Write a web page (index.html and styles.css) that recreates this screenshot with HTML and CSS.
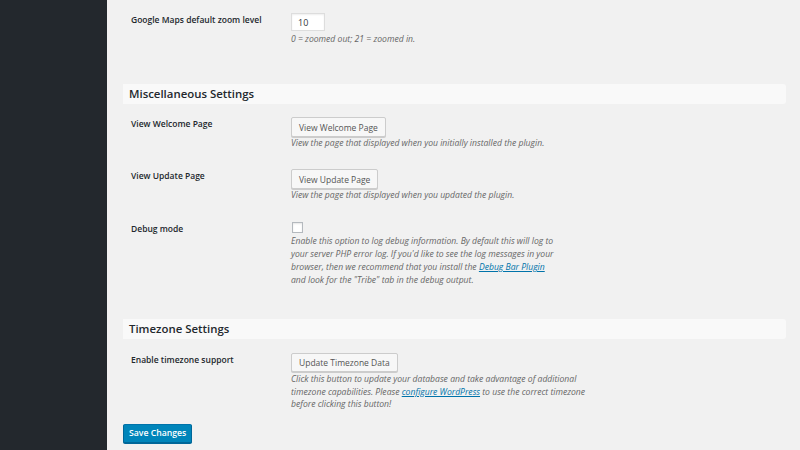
FILE: index.html
```html
<!DOCTYPE html>
<html lang="en">
<head>
    <meta charset="UTF-8">
    <meta name="viewport" content="width=device-width, initial-scale=1.0">
    <title>Events Settings</title>
    <link rel="stylesheet" href="styles.css">
</head>
<body>
    <div class="admin_menu"></div>

    <div class="wrap">
        <div class="form_row row_zoom">
            <div class="form_label">Google Maps default zoom level</div>
            <div class="form_field">
                <input class="small_text" type="text" value="10">
                <p class="description desc_after_input">0 = zoomed out; 21 = zoomed in.</p>
            </div>
        </div>

        <h3 class="section_title section_misc">Miscellaneous Settings</h3>

        <div class="form_row">
            <div class="form_label">View Welcome Page</div>
            <div class="form_field">
                <button class="button">View Welcome Page</button>
                <p class="description">View the page that displayed when you initially installed the plugin.</p>
            </div>
        </div>

        <div class="form_row row_update">
            <div class="form_label">View Update Page</div>
            <div class="form_field">
                <button class="button">View Update Page</button>
                <p class="description">View the page that displayed when you updated the plugin.</p>
            </div>
        </div>

        <div class="form_row row_debug">
            <div class="form_label">Debug mode</div>
            <div class="form_field">
                <span class="checkbox"></span>
                <p class="description desc_debug">Enable this option to log debug information. By default this will log to your server PHP error log. If you'd like to see the log messages in your browser, then we recommend that you install the <a href="#">Debug Bar Plugin</a> and look for the "Tribe" tab in the debug output.</p>
            </div>
        </div>

        <h3 class="section_title section_tz">Timezone Settings</h3>

        <div class="form_row row_tz">
            <div class="form_label">Enable timezone support</div>
            <div class="form_field">
                <button class="button button_tz">Update Timezone Data</button>
                <p class="description desc_tz">Click this button to update your database and take advantage of additional timezone capabilities. Please <a href="#">configure WordPress</a> to use the correct timezone before clicking this button!</p>
            </div>
        </div>

        <button class="button button_primary">Save Changes</button>
    </div>
</body>
</html>
```

FILE: styles.css
```css
*{
    box-sizing: border-box;
    margin: 0;
    padding: 0;
}

body{
    display: flex;
    min-height: 450px;
    background-color: #f1f1f1;
    font-family: "Open Sans", "Noto Sans", sans-serif;
    color: #23282d;
}

.admin_menu{
    width: 107px;
    flex-shrink: 0;
    background-color: #23282d;
}

.wrap{
    flex: 1;
    padding: 13px 14px 0 16px;
}

/* settings rows */
.form_row{
    display: flex;
    padding-left: 8px;
}

.form_label{
    width: 160px;
    flex-shrink: 0;
    font-size: 8.5px;
    font-weight: 600;
    line-height: 13px;
}

.form_field{
    flex: 1;
}

.row_zoom{
    margin-bottom: 38px;
}

.row_update{
    margin-top: 19px;
}

.row_debug{
    margin-top: 20px;
}

.row_tz{
    margin-bottom: 13px;
}

.small_text{
    display: block;
    width: 34px;
    height: 18px;
    padding: 0 6px;
    border: 1px solid #ddd;
    background-color: #fff;
    font-family: inherit;
    font-size: 9px;
    color: #32373c;
    box-shadow: inset 0 1px 2px rgba(0,0,0,.07);
}

.description{
    font-size: 8.6px;
    font-style: italic;
    line-height: 13px;
    color: #666;
}

.desc_after_input{
    margin-top: 2px;
}

.desc_debug{
    width: 268px;
}

.desc_tz{
    width: 300px;
    margin-top: 1px;
    line-height: 12.6px;
}

.description a{
    color: #0073aa;
}

/* section headings */
.section_title{
    height: 20px;
    padding: 0 6px;
    line-height: 20px;
    font-size: 11.4px;
    font-weight: 600;
    background-color: #f9f9f9;
    border-radius: 0 3px 3px 0;
    margin-bottom: 13px;
}

.section_tz{
    margin-top: 32px;
    margin-bottom: 14px;
}

.checkbox{
    display: block;
    width: 11px;
    height: 11px;
    margin: 0 0 2px 1px;
    border: 1px solid #b4b9be;
    background-color: #fff;
    box-shadow: inset 0 1px 2px rgba(0,0,0,.1);
}

/* buttons */
.button{
    display: block;
    height: 20px;
    padding: 0 7px;
    border: 1px solid #ccc;
    border-radius: 2px;
    background-color: #f7f7f7;
    box-shadow: 0 1px 0 #ccc;
    font-family: inherit;
    font-size: 8.5px;
    color: #555;
    cursor: pointer;
}

.button_tz{
    height: 19px;
}

.button_primary{
    height: 19px;
    padding: 0 5px;
    background-color: #0085ba;
    border-color: #0073aa #006799 #006799;
    box-shadow: 0 1px 0 #006799;
    color: #fff;
    font-weight: 600;
    font-size: 8.7px;
}
```
